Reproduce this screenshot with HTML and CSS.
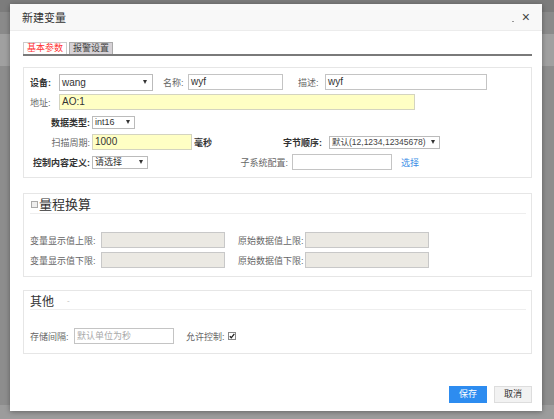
FILE: index.html
```html
<!DOCTYPE html>
<html lang="zh-CN">
<head>
    <meta charset="utf-8">
    <link rel="stylesheet" href="styles.css">
    <title>新建变量</title>
</head>
<body>
<div class="backdrop">
    <div class="dialog">
        <div class="dialog-head">
            <span class="dialog-title">新建变量</span>
            <span class="dialog-tools">
                <span class="min"></span>
                <span class="close">×</span>
            </span>
        </div>

        <div class="dialog-body">
            <div class="tabs">
                <span class="tab active">基本参数</span>
                <span class="tab">报警设置</span>
            </div>

            <div class="box box-basic">
                <div class="row">
                    <span class="lbl strong w-dev">设备:</span>
                    <span class="select w-94">wang<i class="caret"></i></span>
                    <span class="lbl w-name ml-10">名称:</span>
                    <span class="input w-95">wyf</span>
                    <span class="lbl w-desc ml-15">描述:</span>
                    <span class="input w-162">wyf</span>
                </div>
                <div class="row">
                    <span class="lbl w-dev">地址:</span>
                    <span class="input yellow w-356">AO:1</span>
                </div>
                <div class="row">
                    <span class="lbl strong col-right">数据类型:</span>
                    <span class="select small w-43">int16<i class="caret"></i></span>
                </div>
                <div class="row">
                    <span class="lbl col-right">扫描周期:</span>
                    <span class="input yellow w-100">1000</span>
                    <span class="lbl strong w-unit">毫秒</span>
                    <span class="lbl strong w-order">字节顺序:</span>
                    <span class="select small tight w-111">默认(12,1234,12345678)<i class="caret"></i></span>
                </div>
                <div class="row">
                    <span class="lbl strong col-right">控制内容定义:</span>
                    <span class="select small w-56">请选择<i class="caret"></i></span>
                    <span class="lbl w-sub">子系统配置:</span>
                    <span class="input w-100"></span>
                    <a class="link">选择</a>
                </div>
            </div>

            <div class="box box-range">
                <div class="box-head">
                    <span class="checkbox"></span>
                    <span class="box-title big">量程换算</span>
                </div>
                <div class="rows">
                    <div class="row">
                        <span class="lbl w-range">变量显示值上限:</span>
                        <span class="input grey w-124"></span>
                        <span class="lbl w-raw">原始数据值上限:</span>
                        <span class="input grey w-124"></span>
                    </div>
                    <div class="row">
                        <span class="lbl w-range">变量显示值下限:</span>
                        <span class="input grey w-124"></span>
                        <span class="lbl w-raw">原始数据值下限:</span>
                        <span class="input grey w-124"></span>
                    </div>
                </div>
            </div>

            <div class="box box-other">
                <div class="box-head">
                    <span class="box-title">其他</span>
                    <span class="fold">-</span>
                </div>
                <div class="rows">
                    <div class="row">
                        <span class="lbl w-store">存储间隔:</span>
                        <span class="input placeholder w-100">默认单位为秒</span>
                        <span class="lbl w-allow">允许控制:</span>
                        <span class="check">
                            <svg width="8" height="8" viewBox="0 0 8 8">
                                <rect x="0.5" y="0.5" width="7" height="7" fill="#fff" stroke="#888"/>
                                <path d="M1.8 4.2 L3.3 5.8 L6.3 1.8" fill="none" stroke="#222" stroke-width="1.3"/>
                            </svg>
                        </span>
                    </div>
                </div>
            </div>
        </div>

        <div class="dialog-foot">
            <span class="btn primary">保存</span>
            <span class="btn">取消</span>
        </div>
    </div>
</div>
</body>
</html>
```

FILE: styles.css
```css
html, body {
    margin: 0;
    width: 554px;
    height: 419px;
    overflow: hidden;
}

body {
    font-family: "Liberation Sans", "Noto Sans CJK SC", sans-serif;
    font-size: 9px;
    color: #666;
    background: linear-gradient(to bottom,
        #7c7c7c 0, #7c7c7c 12px,
        #8a8a8a 12px, #8a8a8a 34px,
        #a0a0a0 34px, #a0a0a0 66px,
        #8d8d8d 66px, #8d8d8d 405px,
        #9c9c9c 405px);
}

.backdrop {
    box-sizing: border-box;
    height: 419px;
    padding: 4px 12px 8px 10px;
}

.dialog {
    width: 532px;
    height: 407px;
    background-color: #fff;
    box-shadow: 0 1px 5px rgba(0, 0, 0, 0.35);
    display: flex;
    flex-direction: column;
}

.dialog-head {
    height: 26px;
    background-color: #f8f8f8;
    border-bottom: 1px solid #ececec;
    display: flex;
    align-items: center;
    padding: 0 12px 0 12px;
}

.dialog-title {
    font-size: 11px;
    color: #333;
}

.dialog-tools {
    margin-left: auto;
    display: flex;
    align-items: center;
}

.min {
    width: 2px;
    height: 1px;
    background-color: #999;
    margin-top: 8px;
    margin-right: 8px;
}

.close {
    font-size: 14px;
    line-height: 1;
    color: #444;
}

.dialog-body {
    padding: 0 10px 0 13px;
}

.tabs {
    margin-top: 11px;
    display: flex;
    gap: 2px;
    border-bottom: 2px solid #7a7a7a;
}

.tab {
    box-sizing: border-box;
    width: 44px;
    height: 12px;
    font-size: 9px;
    line-height: 10px;
    text-align: center;
    color: #444;
    background-color: #d6d2d6;
    border: 1px solid #aaa;
    border-bottom: none;
}

.tab.active {
    color: #f33;
    background-color: #fff;
    border-color: #ccc;
}

.box {
    border: 1px solid #e6e6e6;
}

.box-basic {
    margin-top: 11px;
    padding: 5px 6px 6px 6px;
    display: flex;
    flex-direction: column;
    gap: 2px;
}

.box-range {
    margin-top: 15px;
}

.box-other {
    margin-top: 13px;
}

.box-head {
    margin: 0 5px 0 6px;
    border-bottom: 1px solid #eee;
    display: flex;
    align-items: center;
    height: 18px;
}

.box-range .box-head {
    height: 19px;
}

.box-title {
    font-size: 12px;
    color: #333;
}

.box-title.big {
    font-size: 13px;
}

.checkbox {
    box-sizing: border-box;
    width: 7px;
    height: 7px;
    border: 1px solid #aaa;
    background-color: #eee;
    margin: 2px 1px 0 1px;
}

.fold {
    color: #bbb;
    font-size: 8px;
    margin-left: 13px;
}

.rows {
    padding: 17px 6px 7px 6px;
    display: flex;
    flex-direction: column;
    gap: 2px;
}

.box-other .rows {
    padding-bottom: 8px;
}

.row {
    display: flex;
    align-items: center;
    height: 18px;
}

.lbl {
    flex-shrink: 0;
    white-space: nowrap;
}

.strong {
    color: #333;
    font-weight: bold;
}

.col-right {
    width: 62px;
    text-align: right;
    padding-right: 2px;
    box-sizing: border-box;
}

.w-dev { width: 29px; }
.w-name { width: 25px; }
.w-desc { width: 27px; }
.w-unit { width: 91px; padding-left: 2px; box-sizing: border-box; }
.w-order { width: 46px; }
.w-sub { width: 144px; text-align: right; padding-right: 4px; box-sizing: border-box; }
.w-range { width: 71px; }
.w-raw { width: 67px; margin-left: 13px; }
.w-store { width: 44px; }
.w-allow { width: 42px; margin-left: 12px; }

.ml-10 { margin-left: 10px; }
.ml-15 { margin-left: 15px; }

.input, .select {
    box-sizing: border-box;
    height: 16px;
    border: 1px solid #c4c4c4;
    background-color: #fff;
    color: #333;
    font-size: 10px;
    line-height: 14px;
    padding-left: 2px;
    white-space: nowrap;
    overflow: hidden;
    flex-shrink: 0;
}

.select {
    height: 17px;
    line-height: 15px;
    display: flex;
    align-items: center;
    border-color: #bbb;
}

.select.small {
    height: 13px;
    line-height: 11px;
    font-size: 9px;
}

.select.tight {
    font-size: 8.5px;
    color: #444;
}

.placeholder {
    color: #aaa;
    font-size: 9px;
}

.caret {
    flex-shrink: 0;
    margin-left: auto;
    margin-right: 5px;
    width: 0;
    height: 0;
    border-left: 2.5px solid transparent;
    border-right: 2.5px solid transparent;
    border-top: 4px solid #333;
}

.select.small .caret {
    margin-right: 4px;
}

.yellow {
    background-color: #ffffc4;
    border-color: #d4d4c0;
}

.grey {
    background-color: #ebe9e3;
    border-color: #c8c8c8;
}

.w-43 { width: 43px; }
.w-56 { width: 56px; }
.w-94 { width: 94px; }
.w-95 { width: 95px; }
.w-100 { width: 100px; }
.w-111 { width: 111px; }
.w-124 { width: 124px; }
.w-162 { width: 162px; }
.w-356 { width: 356px; }

.link {
    margin-left: 9px;
    color: #3a8ee6;
}

.check {
    display: flex;
    align-items: center;
}

.dialog-foot {
    margin-top: 32px;
    padding: 0 10px;
    display: flex;
    justify-content: flex-end;
    gap: 7px;
}

.btn {
    box-sizing: border-box;
    width: 38px;
    height: 17px;
    line-height: 15px;
    text-align: center;
    font-size: 9px;
    color: #333;
    background-color: #f2f2f2;
    border: 1px solid #ddd;
}

.btn.primary {
    color: #fff;
    background-color: #2d8cf0;
    border-color: #2d8cf0;
}
```
